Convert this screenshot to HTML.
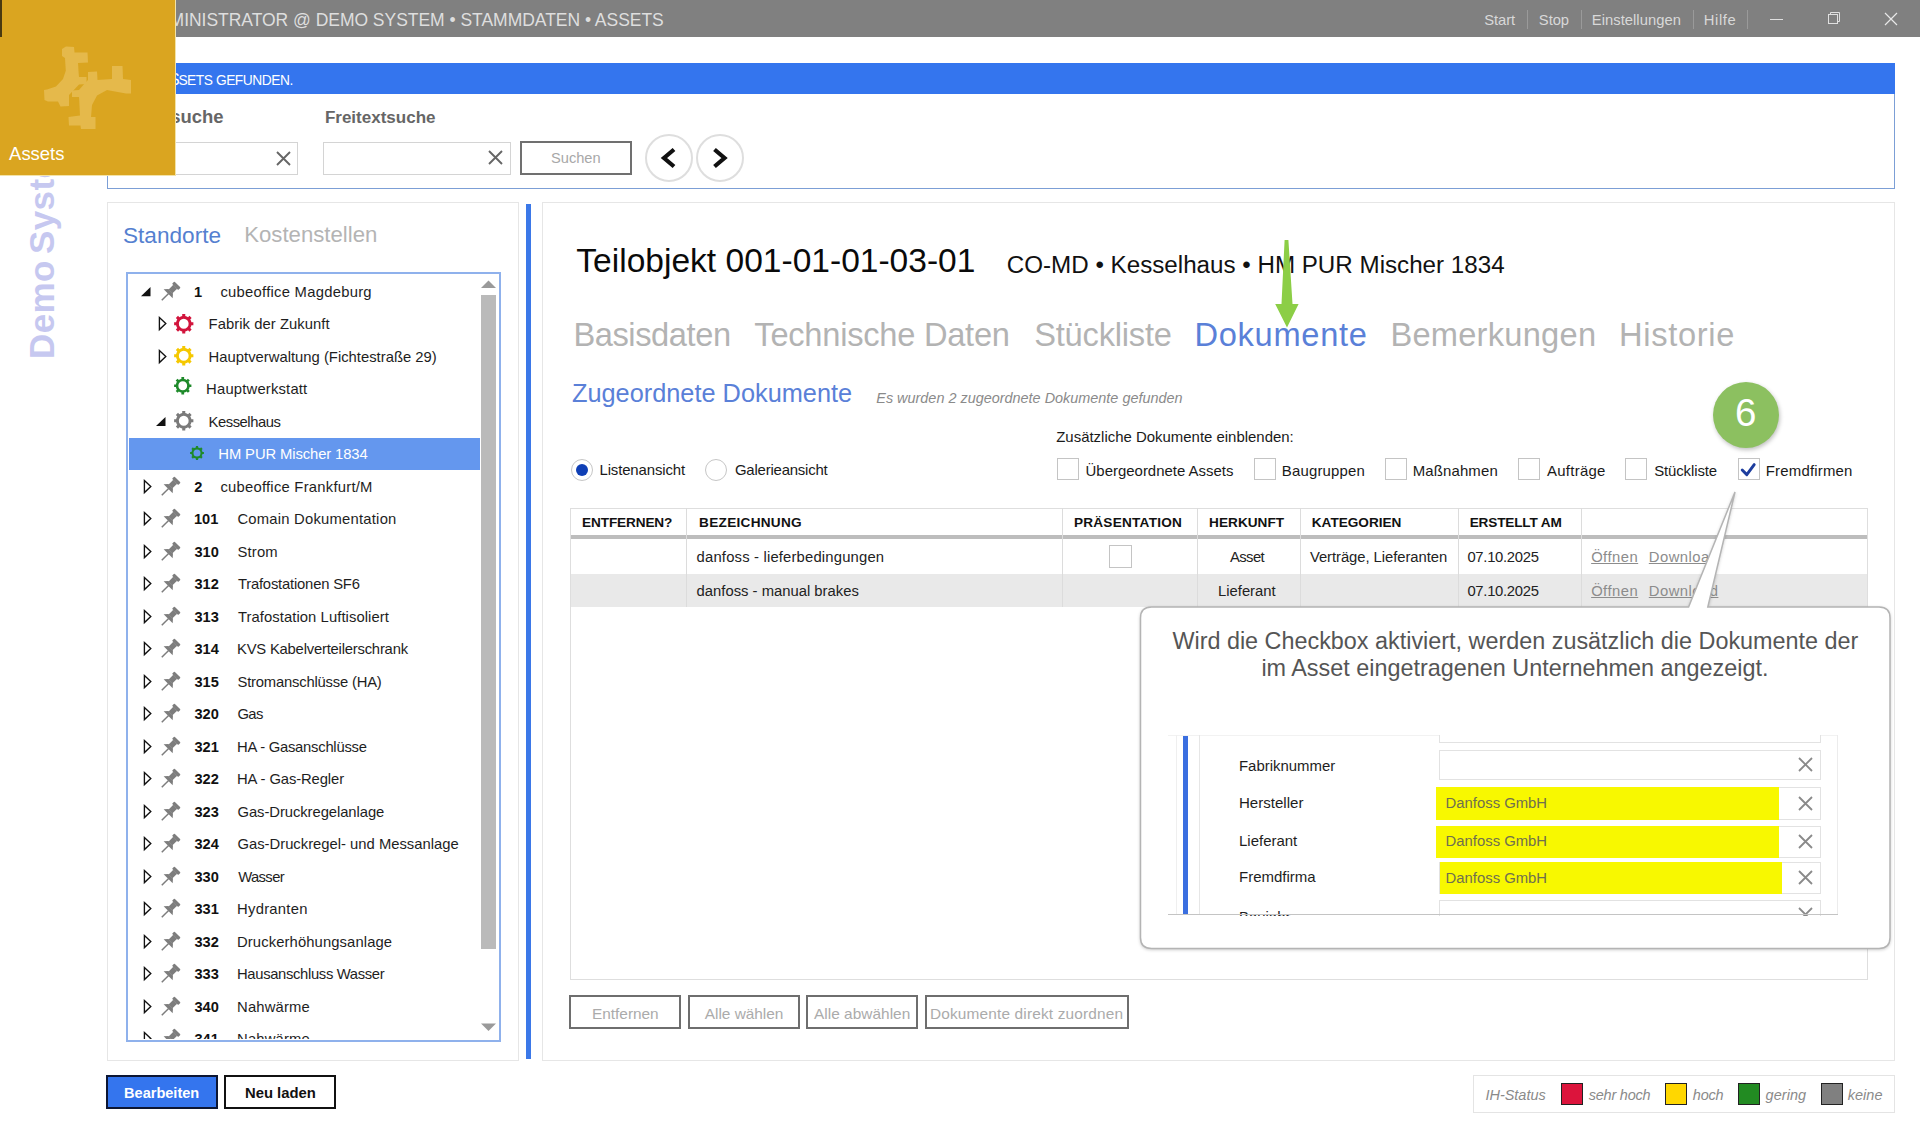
<!DOCTYPE html>
<html><head><meta charset="utf-8"><title>Assets</title><style>*{margin:0;padding:0}
html,body{width:1920px;height:1140px;overflow:hidden;background:#fff;position:relative}
body{font-family:"Liberation Sans",sans-serif}
.a{position:absolute}
.t{white-space:nowrap}
svg.a{overflow:visible}
</style></head><body>
<div class="a" style="left:0.00px;top:0.00px;width:1920.00px;height:36.80px;background:#808080;"></div>
<div class="a t" style="left:169.60px;top:10.86px;font-size:17.50px;line-height:19.55px;color:#dedede;letter-spacing:-0.027px;">MINISTRATOR @ DEMO SYSTEM • STAMMDATEN • ASSETS</div>
<div class="a t" style="left:1484.33px;top:12.32px;font-size:14.78px;line-height:16.52px;color:#d8d8d8;letter-spacing:-0.114px;">Start</div>
<div class="a t" style="left:1538.83px;top:12.32px;font-size:14.78px;line-height:16.52px;color:#d8d8d8;letter-spacing:-0.041px;">Stop</div>
<div class="a t" style="left:1591.82px;top:12.32px;font-size:14.78px;line-height:16.52px;color:#d8d8d8;letter-spacing:0.031px;">Einstellungen</div>
<div class="a t" style="left:1703.82px;top:12.32px;font-size:14.78px;line-height:16.52px;color:#d8d8d8;letter-spacing:0.570px;">Hilfe</div>
<div class="a" style="left:1527.00px;top:9.50px;width:1.00px;height:19.00px;background:#9a9a9a;"></div>
<div class="a" style="left:1581.00px;top:9.50px;width:1.00px;height:19.00px;background:#9a9a9a;"></div>
<div class="a" style="left:1693.00px;top:9.50px;width:1.00px;height:19.00px;background:#9a9a9a;"></div>
<div class="a" style="left:1747.00px;top:9.50px;width:1.00px;height:19.00px;background:#9a9a9a;"></div>
<div class="a" style="left:1770.00px;top:18.50px;width:13.00px;height:1.20px;background:#e0e0e0;"></div>
<svg class="a" style="left:1826.00px;top:10.00px;" width="16" height="16" viewBox="0 0 16 16"><rect x="2.5" y="4.5" width="9" height="9" fill="none" stroke="#e0e0e0" stroke-width="1"/><path d="M4.5,4.5 V2.5 H13.5 V11.5 H11.5" fill="none" stroke="#e0e0e0" stroke-width="1"/></svg>
<svg class="a" style="left:1883.00px;top:11.00px;" width="16" height="16" viewBox="0 0 16 16"><path d="M2,2 L14,14 M14,2 L2,14" stroke="#e8e8e8" stroke-width="1.2"/></svg>
<div class="a" style="left:107.00px;top:63.00px;width:1788.00px;height:126.00px;border:1px solid #7c9fd6;box-sizing:border-box;"></div>
<div class="a" style="left:107.00px;top:62.70px;width:1788.00px;height:31.40px;background:#3475ee;"></div>
<div class="a t" style="left:178.38px;top:72.55px;font-size:13.75px;line-height:15.36px;color:#ffffff;letter-spacing:-0.446px;">SETS GEFUNDEN.</div>
<div class="a t" style="left:158.45px;top:70.53px;font-size:15.99px;line-height:17.86px;color:#ffffff;">AS</div>
<div class="a t" style="left:104.68px;top:107.19px;font-size:18.46px;line-height:20.62px;color:#666;font-weight:700;">Schnellsuche</div>
<div class="a" style="left:120.00px;top:142.00px;width:177.50px;height:32.50px;background:#fff;border:1px solid #d4d4d4;box-sizing:border-box;"></div>
<svg class="a" style="left:275.50px;top:150.50px;" width="15" height="15" viewBox="0 0 15 15"><path d="M1,1 L14,14 M14,1 L1,14" stroke="#666" stroke-width="1.9"/></svg>
<div class="a t" style="left:324.89px;top:108.48px;font-size:17.03px;line-height:19.03px;color:#666;font-weight:700;">Freitextsuche</div>
<div class="a" style="left:323.00px;top:142.00px;width:187.50px;height:32.50px;background:#fff;border:1px solid #d4d4d4;box-sizing:border-box;"></div>
<svg class="a" style="left:488.10px;top:150.30px;" width="15" height="15" viewBox="0 0 15 15"><path d="M1,1 L14,14 M14,1 L1,14" stroke="#666" stroke-width="1.9"/></svg>
<div class="a" style="left:520.00px;top:140.50px;width:112.00px;height:34.50px;background:#fff;border:2.5px solid #707070;box-sizing:border-box;"></div>
<div class="a t" style="left:551.04px;top:150.45px;font-size:14.63px;line-height:16.35px;color:#a8a8a8;">Suchen</div>
<div class="a" style="left:645px;top:133.6px;width:48px;height:48px;border:2px solid #dedede;border-radius:50%;box-sizing:border-box;background:#fff"></div>
<div class="a" style="left:695.7px;top:133.6px;width:48px;height:48px;border:2px solid #dedede;border-radius:50%;box-sizing:border-box;background:#fff"></div>
<svg class="a" style="left:659.00px;top:147.00px;" width="20" height="22" viewBox="0 0 20 22"><path d="M15,2.5 L5,11 L15,19.5" fill="none" stroke="#111" stroke-width="4.2" stroke-linejoin="miter"/></svg>
<svg class="a" style="left:709.50px;top:147.00px;" width="20" height="22" viewBox="0 0 20 22"><path d="M4.5,2.5 L14.5,11 L4.5,19.5" fill="none" stroke="#111" stroke-width="4.2" stroke-linejoin="miter"/></svg>
<div class="a t" style="left:0;top:0;width:400px;height:60px;transform-origin:0 0;transform:translate(22px,359px) rotate(-90deg);font-weight:700;font-size:35px;line-height:40px;color:#c6c8f0;white-space:nowrap;word-spacing:-4px;letter-spacing:0.4px">Demo System</div>
<div class="a" style="left:0.00px;top:0.00px;width:176.00px;height:176.00px;background:#f3e3a8;"></div>
<div class="a" style="left:0.00px;top:0.00px;width:175.00px;height:175.00px;background:#daa520;"></div>
<div class="a" style="left:0.00px;top:0.00px;width:2.00px;height:37.00px;background:#4a3a10;"></div>
<svg class="a" style="left:0.00px;top:0.00px;" width="175" height="175" viewBox="0 0 175 175"><defs><filter id="bl" x="-10%" y="-10%" width="120%" height="120%"><feGaussianBlur stdDeviation="0.6"/></filter></defs><g fill="#e5b94c" filter="url(#bl)"><polygon points="62,49 66,46.5 74,47 74.5,52.5 87.5,52.5 88,62.5 78,63 78.7,74 79,77 86.5,77 86.5,84 79,84.5 69,95 69,106 60.5,106.5 58,101.5 48,101.5 44.5,100 44,90 47,89.5 56,86.5 63,79 65.8,70.7 65,58 62,56"/><polygon points="88,72 97,71.5 97.5,80 112,79 112,66 122.5,66 123,79 131,80 131,93.5 126,93.5 107,90 97,95.5 92,105 91,117 95.5,117 95.5,129 81,129 80.5,125.5 69,125.5 68.5,117 80,115.5 79.3,101 79,97 72,97 72,90.5 79,90 85,83 88,80"/></g></svg>
<div class="a t" style="left:9.10px;top:143.70px;font-size:18.45px;line-height:20.61px;color:#ffffff;">Assets</div>
<div class="a" style="left:107.00px;top:202.00px;width:411.50px;height:859.00px;background:#fff;border:1px solid #e6e6e6;box-sizing:border-box;"></div>
<div class="a t" style="left:122.98px;top:222.53px;font-size:22.61px;line-height:25.27px;color:#5580d0;">Standorte</div>
<div class="a t" style="left:244.23px;top:222.92px;font-size:22.18px;line-height:24.78px;color:#b4b4b4;">Kostenstellen</div>
<div class="a" style="left:126.00px;top:272.00px;width:375.00px;height:770.00px;background:#fff;border:2px solid #8fb1ec;box-sizing:border-box;"></div>
<div class="a" style="left:0;top:0;width:480px;height:1038.5px;overflow:hidden">
<div class="a" style="left:129.00px;top:437.50px;width:351.00px;height:32.00px;background:#6497ee;"></div>
<svg class="a" style="left:140.50px;top:286.50px;" width="9.5" height="9.300000000000011" viewBox="0 0 9.5 9.300000000000011"><polygon points="9.5,0 9.5,9.300000000000011 0,9.300000000000011" fill="#111"/></svg>
<svg class="a" style="left:159.50px;top:281.50px;" width="20" height="20" viewBox="0 0 20 20"><g transform="rotate(45 10 10)" fill="#7d7d7d"><rect x="5.6" y="-0.6" width="8.8" height="3.4" rx="0.8"/><rect x="7.3" y="2.6" width="5.4" height="6.6"/><path d="M3.6,12.6 L16.4,12.6 L13.2,9 L6.8,9 Z"/><rect x="9.25" y="12" width="1.5" height="9.6"/></g></svg>
<div class="a t" style="left:193.92px;top:283.98px;font-size:14.60px;line-height:16.31px;color:#111;font-weight:700;">1</div>
<div class="a t" style="left:220.41px;top:283.80px;font-size:14.80px;line-height:16.53px;color:#1e1e1e;letter-spacing:0.263px;">cubeoffice Magdeburg</div>
<svg class="a" style="left:158.30px;top:316.20px;" width="10" height="15" viewBox="0 0 10 15"><polygon points="1.4,1.6 7.8,7.6 1.4,13.6" fill="none" stroke="#111" stroke-width="1.35" stroke-linejoin="miter"/></svg>
<svg class="a" style="left:173.25px;top:312.55px;" width="21.5" height="21.5" viewBox="0 0 21.5 21.5"><path d="M7.77,3.54 L9.23,3.10 L9.22,1.12 L12.28,1.12 L12.27,3.10 L13.73,3.54 L15.08,4.26 L16.48,2.86 L18.64,5.02 L17.24,6.42 L17.96,7.77 L18.40,9.23 L20.38,9.22 L20.38,12.28 L18.40,12.27 L17.96,13.73 L17.24,15.08 L18.64,16.48 L16.48,18.64 L15.08,17.24 L13.73,17.96 L12.27,18.40 L12.28,20.38 L9.22,20.38 L9.23,18.40 L7.77,17.96 L6.42,17.24 L5.02,18.64 L2.86,16.48 L4.26,15.08 L3.54,13.73 L3.10,12.27 L1.12,12.28 L1.12,9.22 L3.10,9.23 L3.54,7.77 L4.26,6.42 L2.86,5.02 L5.02,2.86 L6.42,4.26Z M15.62,10.75 A4.875,4.875 0 1,0 5.88,10.75 A4.875,4.875 0 1,0 15.62,10.75Z" fill="#d2143c" fill-rule="evenodd"/></svg>
<div class="a t" style="left:208.62px;top:316.30px;font-size:14.80px;line-height:16.53px;color:#1e1e1e;letter-spacing:0.055px;">Fabrik der Zukunft</div>
<svg class="a" style="left:158.30px;top:348.70px;" width="10" height="15" viewBox="0 0 10 15"><polygon points="1.4,1.6 7.8,7.6 1.4,13.6" fill="none" stroke="#111" stroke-width="1.35" stroke-linejoin="miter"/></svg>
<svg class="a" style="left:173.25px;top:345.05px;" width="21.5" height="21.5" viewBox="0 0 21.5 21.5"><path d="M7.77,3.54 L9.23,3.10 L9.22,1.12 L12.28,1.12 L12.27,3.10 L13.73,3.54 L15.08,4.26 L16.48,2.86 L18.64,5.02 L17.24,6.42 L17.96,7.77 L18.40,9.23 L20.38,9.22 L20.38,12.28 L18.40,12.27 L17.96,13.73 L17.24,15.08 L18.64,16.48 L16.48,18.64 L15.08,17.24 L13.73,17.96 L12.27,18.40 L12.28,20.38 L9.22,20.38 L9.23,18.40 L7.77,17.96 L6.42,17.24 L5.02,18.64 L2.86,16.48 L4.26,15.08 L3.54,13.73 L3.10,12.27 L1.12,12.28 L1.12,9.22 L3.10,9.23 L3.54,7.77 L4.26,6.42 L2.86,5.02 L5.02,2.86 L6.42,4.26Z M15.62,10.75 A4.875,4.875 0 1,0 5.88,10.75 A4.875,4.875 0 1,0 15.62,10.75Z" fill="#f5c800" fill-rule="evenodd"/></svg>
<div class="a t" style="left:208.62px;top:348.80px;font-size:14.80px;line-height:16.53px;color:#1e1e1e;letter-spacing:0.010px;">Hauptverwaltung (Fichtestraße 29)</div>
<svg class="a" style="left:173.25px;top:376.25px;" width="19.5" height="19.5" viewBox="0 0 19.5 19.5"><path d="M7.07,3.28 L8.38,2.88 L8.38,1.11 L11.12,1.11 L11.12,2.88 L12.43,3.28 L13.64,3.93 L14.89,2.67 L16.83,4.61 L15.57,5.86 L16.22,7.07 L16.62,8.38 L18.39,8.38 L18.39,11.12 L16.62,11.12 L16.22,12.43 L15.57,13.64 L16.83,14.89 L14.89,16.83 L13.64,15.57 L12.43,16.22 L11.12,16.62 L11.12,18.39 L8.38,18.39 L8.38,16.62 L7.07,16.22 L5.86,15.57 L4.61,16.83 L2.67,14.89 L3.93,13.64 L3.28,12.43 L2.88,11.12 L1.11,11.12 L1.11,8.38 L2.88,8.38 L3.28,7.07 L3.93,5.86 L2.67,4.61 L4.61,2.67 L5.86,3.93Z M14.12,9.75 A4.375,4.375 0 1,0 5.38,9.75 A4.375,4.375 0 1,0 14.12,9.75Z" fill="#1e8a2a" fill-rule="evenodd"/></svg>
<div class="a t" style="left:206.12px;top:381.30px;font-size:14.80px;line-height:16.53px;color:#1e1e1e;letter-spacing:0.186px;">Hauptwerkstatt</div>
<svg class="a" style="left:155.50px;top:416.50px;" width="9.5" height="9.0" viewBox="0 0 9.5 9.0"><polygon points="9.5,0 9.5,9.0 0,9.0" fill="#111"/></svg>
<svg class="a" style="left:173.25px;top:410.05px;" width="21.5" height="21.5" viewBox="0 0 21.5 21.5"><path d="M7.77,3.54 L9.23,3.10 L9.22,1.12 L12.28,1.12 L12.27,3.10 L13.73,3.54 L15.08,4.26 L16.48,2.86 L18.64,5.02 L17.24,6.42 L17.96,7.77 L18.40,9.23 L20.38,9.22 L20.38,12.28 L18.40,12.27 L17.96,13.73 L17.24,15.08 L18.64,16.48 L16.48,18.64 L15.08,17.24 L13.73,17.96 L12.27,18.40 L12.28,20.38 L9.22,20.38 L9.23,18.40 L7.77,17.96 L6.42,17.24 L5.02,18.64 L2.86,16.48 L4.26,15.08 L3.54,13.73 L3.10,12.27 L1.12,12.28 L1.12,9.22 L3.10,9.23 L3.54,7.77 L4.26,6.42 L2.86,5.02 L5.02,2.86 L6.42,4.26Z M15.62,10.75 A4.875,4.875 0 1,0 5.88,10.75 A4.875,4.875 0 1,0 15.62,10.75Z" fill="#7a7a7a" fill-rule="evenodd"/></svg>
<div class="a t" style="left:208.62px;top:413.80px;font-size:14.80px;line-height:16.53px;color:#1e1e1e;letter-spacing:-0.479px;">Kesselhaus</div>
<svg class="a" style="left:188.80px;top:445.20px;" width="16" height="16" viewBox="0 0 16 16"><path d="M5.86,2.83 L6.91,2.51 L6.90,1.09 L9.10,1.09 L9.09,2.51 L10.14,2.83 L11.11,3.34 L12.11,2.34 L13.66,3.89 L12.66,4.89 L13.17,5.86 L13.49,6.91 L14.91,6.90 L14.91,9.10 L13.49,9.09 L13.17,10.14 L12.66,11.11 L13.66,12.11 L12.11,13.66 L11.11,12.66 L10.14,13.17 L9.09,13.49 L9.10,14.91 L6.90,14.91 L6.91,13.49 L5.86,13.17 L4.89,12.66 L3.89,13.66 L2.34,12.11 L3.34,11.11 L2.83,10.14 L2.51,9.09 L1.09,9.10 L1.09,6.90 L2.51,6.91 L2.83,5.86 L3.34,4.89 L2.34,3.89 L3.89,2.34 L4.89,3.34Z M11.50,8.00 A3.5,3.5 0 1,0 4.50,8.00 A3.5,3.5 0 1,0 11.50,8.00Z" fill="#1e8a2a" fill-rule="evenodd"/></svg>
<div class="a t" style="left:218.32px;top:446.30px;font-size:14.80px;line-height:16.53px;color:#ffffff;letter-spacing:-0.106px;">HM PUR Mischer 1834</div>
<svg class="a" style="left:142.80px;top:478.70px;" width="10" height="15" viewBox="0 0 10 15"><polygon points="1.4,1.6 7.8,7.6 1.4,13.6" fill="none" stroke="#111" stroke-width="1.35" stroke-linejoin="miter"/></svg>
<svg class="a" style="left:159.50px;top:476.50px;" width="20" height="20" viewBox="0 0 20 20"><g transform="rotate(45 10 10)" fill="#7d7d7d"><rect x="5.6" y="-0.6" width="8.8" height="3.4" rx="0.8"/><rect x="7.3" y="2.6" width="5.4" height="6.6"/><path d="M3.6,12.6 L16.4,12.6 L13.2,9 L6.8,9 Z"/><rect x="9.25" y="12" width="1.5" height="9.6"/></g></svg>
<div class="a t" style="left:194.29px;top:478.98px;font-size:14.60px;line-height:16.31px;color:#111;font-weight:700;">2</div>
<div class="a t" style="left:220.41px;top:478.80px;font-size:14.80px;line-height:16.53px;color:#1e1e1e;letter-spacing:0.242px;">cubeoffice Frankfurt/M</div>
<svg class="a" style="left:142.80px;top:511.20px;" width="10" height="15" viewBox="0 0 10 15"><polygon points="1.4,1.6 7.8,7.6 1.4,13.6" fill="none" stroke="#111" stroke-width="1.35" stroke-linejoin="miter"/></svg>
<svg class="a" style="left:159.50px;top:509.00px;" width="20" height="20" viewBox="0 0 20 20"><g transform="rotate(45 10 10)" fill="#7d7d7d"><rect x="5.6" y="-0.6" width="8.8" height="3.4" rx="0.8"/><rect x="7.3" y="2.6" width="5.4" height="6.6"/><path d="M3.6,12.6 L16.4,12.6 L13.2,9 L6.8,9 Z"/><rect x="9.25" y="12" width="1.5" height="9.6"/></g></svg>
<div class="a t" style="left:193.92px;top:511.48px;font-size:14.60px;line-height:16.31px;color:#111;font-weight:700;">101</div>
<div class="a t" style="left:237.46px;top:511.30px;font-size:14.80px;line-height:16.53px;color:#1e1e1e;letter-spacing:0.223px;">Comain Dokumentation</div>
<svg class="a" style="left:142.80px;top:543.70px;" width="10" height="15" viewBox="0 0 10 15"><polygon points="1.4,1.6 7.8,7.6 1.4,13.6" fill="none" stroke="#111" stroke-width="1.35" stroke-linejoin="miter"/></svg>
<svg class="a" style="left:159.50px;top:541.50px;" width="20" height="20" viewBox="0 0 20 20"><g transform="rotate(45 10 10)" fill="#7d7d7d"><rect x="5.6" y="-0.6" width="8.8" height="3.4" rx="0.8"/><rect x="7.3" y="2.6" width="5.4" height="6.6"/><path d="M3.6,12.6 L16.4,12.6 L13.2,9 L6.8,9 Z"/><rect x="9.25" y="12" width="1.5" height="9.6"/></g></svg>
<div class="a t" style="left:194.44px;top:543.98px;font-size:14.60px;line-height:16.31px;color:#111;font-weight:700;">310</div>
<div class="a t" style="left:237.53px;top:543.80px;font-size:14.80px;line-height:16.53px;color:#1e1e1e;letter-spacing:0.178px;">Strom</div>
<svg class="a" style="left:142.80px;top:576.20px;" width="10" height="15" viewBox="0 0 10 15"><polygon points="1.4,1.6 7.8,7.6 1.4,13.6" fill="none" stroke="#111" stroke-width="1.35" stroke-linejoin="miter"/></svg>
<svg class="a" style="left:159.50px;top:574.00px;" width="20" height="20" viewBox="0 0 20 20"><g transform="rotate(45 10 10)" fill="#7d7d7d"><rect x="5.6" y="-0.6" width="8.8" height="3.4" rx="0.8"/><rect x="7.3" y="2.6" width="5.4" height="6.6"/><path d="M3.6,12.6 L16.4,12.6 L13.2,9 L6.8,9 Z"/><rect x="9.25" y="12" width="1.5" height="9.6"/></g></svg>
<div class="a t" style="left:194.44px;top:576.48px;font-size:14.60px;line-height:16.31px;color:#111;font-weight:700;">312</div>
<div class="a t" style="left:237.90px;top:576.30px;font-size:14.80px;line-height:16.53px;color:#1e1e1e;letter-spacing:-0.194px;">Trafostationen SF6</div>
<svg class="a" style="left:142.80px;top:608.70px;" width="10" height="15" viewBox="0 0 10 15"><polygon points="1.4,1.6 7.8,7.6 1.4,13.6" fill="none" stroke="#111" stroke-width="1.35" stroke-linejoin="miter"/></svg>
<svg class="a" style="left:159.50px;top:606.50px;" width="20" height="20" viewBox="0 0 20 20"><g transform="rotate(45 10 10)" fill="#7d7d7d"><rect x="5.6" y="-0.6" width="8.8" height="3.4" rx="0.8"/><rect x="7.3" y="2.6" width="5.4" height="6.6"/><path d="M3.6,12.6 L16.4,12.6 L13.2,9 L6.8,9 Z"/><rect x="9.25" y="12" width="1.5" height="9.6"/></g></svg>
<div class="a t" style="left:194.44px;top:608.98px;font-size:14.60px;line-height:16.31px;color:#111;font-weight:700;">313</div>
<div class="a t" style="left:237.90px;top:608.80px;font-size:14.80px;line-height:16.53px;color:#1e1e1e;letter-spacing:0.078px;">Trafostation Luftisoliert</div>
<svg class="a" style="left:142.80px;top:641.20px;" width="10" height="15" viewBox="0 0 10 15"><polygon points="1.4,1.6 7.8,7.6 1.4,13.6" fill="none" stroke="#111" stroke-width="1.35" stroke-linejoin="miter"/></svg>
<svg class="a" style="left:159.50px;top:639.00px;" width="20" height="20" viewBox="0 0 20 20"><g transform="rotate(45 10 10)" fill="#7d7d7d"><rect x="5.6" y="-0.6" width="8.8" height="3.4" rx="0.8"/><rect x="7.3" y="2.6" width="5.4" height="6.6"/><path d="M3.6,12.6 L16.4,12.6 L13.2,9 L6.8,9 Z"/><rect x="9.25" y="12" width="1.5" height="9.6"/></g></svg>
<div class="a t" style="left:194.44px;top:641.48px;font-size:14.60px;line-height:16.31px;color:#111;font-weight:700;">314</div>
<div class="a t" style="left:237.02px;top:641.30px;font-size:14.80px;line-height:16.53px;color:#1e1e1e;letter-spacing:-0.207px;">KVS Kabelverteilerschrank</div>
<svg class="a" style="left:142.80px;top:673.70px;" width="10" height="15" viewBox="0 0 10 15"><polygon points="1.4,1.6 7.8,7.6 1.4,13.6" fill="none" stroke="#111" stroke-width="1.35" stroke-linejoin="miter"/></svg>
<svg class="a" style="left:159.50px;top:671.50px;" width="20" height="20" viewBox="0 0 20 20"><g transform="rotate(45 10 10)" fill="#7d7d7d"><rect x="5.6" y="-0.6" width="8.8" height="3.4" rx="0.8"/><rect x="7.3" y="2.6" width="5.4" height="6.6"/><path d="M3.6,12.6 L16.4,12.6 L13.2,9 L6.8,9 Z"/><rect x="9.25" y="12" width="1.5" height="9.6"/></g></svg>
<div class="a t" style="left:194.44px;top:673.98px;font-size:14.60px;line-height:16.31px;color:#111;font-weight:700;">315</div>
<div class="a t" style="left:237.53px;top:673.80px;font-size:14.80px;line-height:16.53px;color:#1e1e1e;letter-spacing:-0.197px;">Stromanschlüsse (HA)</div>
<svg class="a" style="left:142.80px;top:706.20px;" width="10" height="15" viewBox="0 0 10 15"><polygon points="1.4,1.6 7.8,7.6 1.4,13.6" fill="none" stroke="#111" stroke-width="1.35" stroke-linejoin="miter"/></svg>
<svg class="a" style="left:159.50px;top:704.00px;" width="20" height="20" viewBox="0 0 20 20"><g transform="rotate(45 10 10)" fill="#7d7d7d"><rect x="5.6" y="-0.6" width="8.8" height="3.4" rx="0.8"/><rect x="7.3" y="2.6" width="5.4" height="6.6"/><path d="M3.6,12.6 L16.4,12.6 L13.2,9 L6.8,9 Z"/><rect x="9.25" y="12" width="1.5" height="9.6"/></g></svg>
<div class="a t" style="left:194.44px;top:706.48px;font-size:14.60px;line-height:16.31px;color:#111;font-weight:700;">320</div>
<div class="a t" style="left:237.46px;top:706.30px;font-size:14.80px;line-height:16.53px;color:#1e1e1e;letter-spacing:-0.600px;">Gas</div>
<svg class="a" style="left:142.80px;top:738.70px;" width="10" height="15" viewBox="0 0 10 15"><polygon points="1.4,1.6 7.8,7.6 1.4,13.6" fill="none" stroke="#111" stroke-width="1.35" stroke-linejoin="miter"/></svg>
<svg class="a" style="left:159.50px;top:736.50px;" width="20" height="20" viewBox="0 0 20 20"><g transform="rotate(45 10 10)" fill="#7d7d7d"><rect x="5.6" y="-0.6" width="8.8" height="3.4" rx="0.8"/><rect x="7.3" y="2.6" width="5.4" height="6.6"/><path d="M3.6,12.6 L16.4,12.6 L13.2,9 L6.8,9 Z"/><rect x="9.25" y="12" width="1.5" height="9.6"/></g></svg>
<div class="a t" style="left:194.44px;top:738.98px;font-size:14.60px;line-height:16.31px;color:#111;font-weight:700;">321</div>
<div class="a t" style="left:237.02px;top:738.80px;font-size:14.80px;line-height:16.53px;color:#1e1e1e;letter-spacing:-0.243px;">HA - Gasanschlüsse</div>
<svg class="a" style="left:142.80px;top:771.20px;" width="10" height="15" viewBox="0 0 10 15"><polygon points="1.4,1.6 7.8,7.6 1.4,13.6" fill="none" stroke="#111" stroke-width="1.35" stroke-linejoin="miter"/></svg>
<svg class="a" style="left:159.50px;top:769.00px;" width="20" height="20" viewBox="0 0 20 20"><g transform="rotate(45 10 10)" fill="#7d7d7d"><rect x="5.6" y="-0.6" width="8.8" height="3.4" rx="0.8"/><rect x="7.3" y="2.6" width="5.4" height="6.6"/><path d="M3.6,12.6 L16.4,12.6 L13.2,9 L6.8,9 Z"/><rect x="9.25" y="12" width="1.5" height="9.6"/></g></svg>
<div class="a t" style="left:194.44px;top:771.48px;font-size:14.60px;line-height:16.31px;color:#111;font-weight:700;">322</div>
<div class="a t" style="left:237.02px;top:771.30px;font-size:14.80px;line-height:16.53px;color:#1e1e1e;letter-spacing:-0.104px;">HA - Gas-Regler</div>
<svg class="a" style="left:142.80px;top:803.70px;" width="10" height="15" viewBox="0 0 10 15"><polygon points="1.4,1.6 7.8,7.6 1.4,13.6" fill="none" stroke="#111" stroke-width="1.35" stroke-linejoin="miter"/></svg>
<svg class="a" style="left:159.50px;top:801.50px;" width="20" height="20" viewBox="0 0 20 20"><g transform="rotate(45 10 10)" fill="#7d7d7d"><rect x="5.6" y="-0.6" width="8.8" height="3.4" rx="0.8"/><rect x="7.3" y="2.6" width="5.4" height="6.6"/><path d="M3.6,12.6 L16.4,12.6 L13.2,9 L6.8,9 Z"/><rect x="9.25" y="12" width="1.5" height="9.6"/></g></svg>
<div class="a t" style="left:194.44px;top:803.98px;font-size:14.60px;line-height:16.31px;color:#111;font-weight:700;">323</div>
<div class="a t" style="left:237.46px;top:803.80px;font-size:14.80px;line-height:16.53px;color:#1e1e1e;letter-spacing:-0.061px;">Gas-Druckregelanlage</div>
<svg class="a" style="left:142.80px;top:836.20px;" width="10" height="15" viewBox="0 0 10 15"><polygon points="1.4,1.6 7.8,7.6 1.4,13.6" fill="none" stroke="#111" stroke-width="1.35" stroke-linejoin="miter"/></svg>
<svg class="a" style="left:159.50px;top:834.00px;" width="20" height="20" viewBox="0 0 20 20"><g transform="rotate(45 10 10)" fill="#7d7d7d"><rect x="5.6" y="-0.6" width="8.8" height="3.4" rx="0.8"/><rect x="7.3" y="2.6" width="5.4" height="6.6"/><path d="M3.6,12.6 L16.4,12.6 L13.2,9 L6.8,9 Z"/><rect x="9.25" y="12" width="1.5" height="9.6"/></g></svg>
<div class="a t" style="left:194.44px;top:836.48px;font-size:14.60px;line-height:16.31px;color:#111;font-weight:700;">324</div>
<div class="a t" style="left:237.46px;top:836.30px;font-size:14.80px;line-height:16.53px;color:#1e1e1e;">Gas-Druckregel- und Messanlage</div>
<svg class="a" style="left:142.80px;top:868.70px;" width="10" height="15" viewBox="0 0 10 15"><polygon points="1.4,1.6 7.8,7.6 1.4,13.6" fill="none" stroke="#111" stroke-width="1.35" stroke-linejoin="miter"/></svg>
<svg class="a" style="left:159.50px;top:866.50px;" width="20" height="20" viewBox="0 0 20 20"><g transform="rotate(45 10 10)" fill="#7d7d7d"><rect x="5.6" y="-0.6" width="8.8" height="3.4" rx="0.8"/><rect x="7.3" y="2.6" width="5.4" height="6.6"/><path d="M3.6,12.6 L16.4,12.6 L13.2,9 L6.8,9 Z"/><rect x="9.25" y="12" width="1.5" height="9.6"/></g></svg>
<div class="a t" style="left:194.44px;top:868.98px;font-size:14.60px;line-height:16.31px;color:#111;font-weight:700;">330</div>
<div class="a t" style="left:238.13px;top:868.80px;font-size:14.80px;line-height:16.53px;color:#1e1e1e;letter-spacing:-0.600px;">Wasser</div>
<svg class="a" style="left:142.80px;top:901.20px;" width="10" height="15" viewBox="0 0 10 15"><polygon points="1.4,1.6 7.8,7.6 1.4,13.6" fill="none" stroke="#111" stroke-width="1.35" stroke-linejoin="miter"/></svg>
<svg class="a" style="left:159.50px;top:899.00px;" width="20" height="20" viewBox="0 0 20 20"><g transform="rotate(45 10 10)" fill="#7d7d7d"><rect x="5.6" y="-0.6" width="8.8" height="3.4" rx="0.8"/><rect x="7.3" y="2.6" width="5.4" height="6.6"/><path d="M3.6,12.6 L16.4,12.6 L13.2,9 L6.8,9 Z"/><rect x="9.25" y="12" width="1.5" height="9.6"/></g></svg>
<div class="a t" style="left:194.44px;top:901.48px;font-size:14.60px;line-height:16.31px;color:#111;font-weight:700;">331</div>
<div class="a t" style="left:237.02px;top:901.30px;font-size:14.80px;line-height:16.53px;color:#1e1e1e;letter-spacing:0.268px;">Hydranten</div>
<svg class="a" style="left:142.80px;top:933.70px;" width="10" height="15" viewBox="0 0 10 15"><polygon points="1.4,1.6 7.8,7.6 1.4,13.6" fill="none" stroke="#111" stroke-width="1.35" stroke-linejoin="miter"/></svg>
<svg class="a" style="left:159.50px;top:931.50px;" width="20" height="20" viewBox="0 0 20 20"><g transform="rotate(45 10 10)" fill="#7d7d7d"><rect x="5.6" y="-0.6" width="8.8" height="3.4" rx="0.8"/><rect x="7.3" y="2.6" width="5.4" height="6.6"/><path d="M3.6,12.6 L16.4,12.6 L13.2,9 L6.8,9 Z"/><rect x="9.25" y="12" width="1.5" height="9.6"/></g></svg>
<div class="a t" style="left:194.44px;top:933.98px;font-size:14.60px;line-height:16.31px;color:#111;font-weight:700;">332</div>
<div class="a t" style="left:237.02px;top:933.80px;font-size:14.80px;line-height:16.53px;color:#1e1e1e;letter-spacing:0.106px;">Druckerhöhungsanlage</div>
<svg class="a" style="left:142.80px;top:966.20px;" width="10" height="15" viewBox="0 0 10 15"><polygon points="1.4,1.6 7.8,7.6 1.4,13.6" fill="none" stroke="#111" stroke-width="1.35" stroke-linejoin="miter"/></svg>
<svg class="a" style="left:159.50px;top:964.00px;" width="20" height="20" viewBox="0 0 20 20"><g transform="rotate(45 10 10)" fill="#7d7d7d"><rect x="5.6" y="-0.6" width="8.8" height="3.4" rx="0.8"/><rect x="7.3" y="2.6" width="5.4" height="6.6"/><path d="M3.6,12.6 L16.4,12.6 L13.2,9 L6.8,9 Z"/><rect x="9.25" y="12" width="1.5" height="9.6"/></g></svg>
<div class="a t" style="left:194.44px;top:966.48px;font-size:14.60px;line-height:16.31px;color:#111;font-weight:700;">333</div>
<div class="a t" style="left:237.02px;top:966.30px;font-size:14.80px;line-height:16.53px;color:#1e1e1e;letter-spacing:-0.340px;">Hausanschluss Wasser</div>
<svg class="a" style="left:142.80px;top:998.70px;" width="10" height="15" viewBox="0 0 10 15"><polygon points="1.4,1.6 7.8,7.6 1.4,13.6" fill="none" stroke="#111" stroke-width="1.35" stroke-linejoin="miter"/></svg>
<svg class="a" style="left:159.50px;top:996.50px;" width="20" height="20" viewBox="0 0 20 20"><g transform="rotate(45 10 10)" fill="#7d7d7d"><rect x="5.6" y="-0.6" width="8.8" height="3.4" rx="0.8"/><rect x="7.3" y="2.6" width="5.4" height="6.6"/><path d="M3.6,12.6 L16.4,12.6 L13.2,9 L6.8,9 Z"/><rect x="9.25" y="12" width="1.5" height="9.6"/></g></svg>
<div class="a t" style="left:194.44px;top:998.98px;font-size:14.60px;line-height:16.31px;color:#111;font-weight:700;">340</div>
<div class="a t" style="left:237.02px;top:998.80px;font-size:14.80px;line-height:16.53px;color:#1e1e1e;letter-spacing:0.185px;">Nahwärme</div>
<svg class="a" style="left:142.80px;top:1031.20px;" width="10" height="15" viewBox="0 0 10 15"><polygon points="1.4,1.6 7.8,7.6 1.4,13.6" fill="none" stroke="#111" stroke-width="1.35" stroke-linejoin="miter"/></svg>
<svg class="a" style="left:159.50px;top:1029.00px;" width="20" height="20" viewBox="0 0 20 20"><g transform="rotate(45 10 10)" fill="#7d7d7d"><rect x="5.6" y="-0.6" width="8.8" height="3.4" rx="0.8"/><rect x="7.3" y="2.6" width="5.4" height="6.6"/><path d="M3.6,12.6 L16.4,12.6 L13.2,9 L6.8,9 Z"/><rect x="9.25" y="12" width="1.5" height="9.6"/></g></svg>
<div class="a t" style="left:194.44px;top:1031.48px;font-size:14.60px;line-height:16.31px;color:#111;font-weight:700;">341</div>
<div class="a t" style="left:237.02px;top:1031.30px;font-size:14.80px;line-height:16.53px;color:#1e1e1e;letter-spacing:0.185px;">Nahwärme</div>
</div>
<svg class="a" style="left:481.00px;top:280.00px;" width="15" height="9" viewBox="0 0 15 9"><polygon points="7.5,0.5 15,8 0,8" fill="#9a9a9a"/></svg>
<div class="a" style="left:481.00px;top:294.70px;width:15.00px;height:654.30px;background:#bababa;"></div>
<svg class="a" style="left:481.00px;top:1023.00px;" width="15" height="9" viewBox="0 0 15 9"><polygon points="0,0.5 15,0.5 7.5,8" fill="#9a9a9a"/></svg>
<div class="a" style="left:526.00px;top:203.50px;width:5.00px;height:855.50px;background:#3b78e8;"></div>
<div class="a" style="left:542.00px;top:202.00px;width:1353.00px;height:858.50px;background:#fff;border:1px solid #e6e6e6;box-sizing:border-box;"></div>
<div class="a t" style="left:576.33px;top:241.92px;font-size:33.56px;line-height:37.49px;color:#0a0a0a;">Teilobjekt 001-01-01-03-01</div>
<div class="a t" style="left:1006.79px;top:250.51px;font-size:24.18px;line-height:27.01px;color:#111;">CO-MD • Kesselhaus • HM PUR Mischer 1834</div>
<div class="a t" style="left:573.39px;top:316.85px;font-size:32.64px;line-height:36.46px;color:#b3b3b3;letter-spacing:-0.408px;">Basisdaten</div>
<div class="a t" style="left:754.35px;top:316.85px;font-size:32.64px;line-height:36.46px;color:#b3b3b3;letter-spacing:-0.247px;">Technische Daten</div>
<div class="a t" style="left:1034.13px;top:316.85px;font-size:32.64px;line-height:36.46px;color:#b3b3b3;letter-spacing:-0.195px;">Stückliste</div>
<div class="a t" style="left:1194.39px;top:316.85px;font-size:32.64px;line-height:36.46px;color:#5a80d8;letter-spacing:0.716px;">Dokumente</div>
<div class="a t" style="left:1390.39px;top:316.85px;font-size:32.64px;line-height:36.46px;color:#b3b3b3;letter-spacing:0.255px;">Bemerkungen</div>
<div class="a t" style="left:1619.09px;top:316.85px;font-size:32.64px;line-height:36.46px;color:#b3b3b3;letter-spacing:0.676px;">Historie</div>
<svg class="a" style="left:1270.00px;top:238.00px;" width="36" height="92" viewBox="0 0 36 92"><path d="M14.6,2 L18.4,2 L22.5,66 L28.6,66 L17,89.5 L5.2,66 L11.5,66 Z" fill="#8cce46"/></svg>
<div class="a t" style="left:571.94px;top:379.37px;font-size:25.33px;line-height:28.30px;color:#5a80d8;">Zugeordnete Dokumente</div>
<div class="a t" style="left:876.27px;top:389.64px;font-size:14.43px;line-height:16.12px;color:#8a8a8a;font-style:italic;">Es wurden 2 zugeordnete Dokumente gefunden</div>
<div class="a t" style="left:1056.25px;top:429.17px;font-size:14.95px;line-height:16.70px;color:#1a1a1a;">Zusätzliche Dokumente einblenden:</div>
<div class="a" style="left:570.7px;top:459px;width:22px;height:22px;border:1.8px solid #c6c6c6;border-radius:50%;box-sizing:border-box;background:#fff"></div>
<div class="a" style="left:575.7px;top:464px;width:12px;height:12px;border-radius:50%;background:#0f3fb5"></div>
<div class="a" style="left:705px;top:459px;width:22px;height:22px;border:1.8px solid #c6c6c6;border-radius:50%;box-sizing:border-box;background:#fff"></div>
<div class="a t" style="left:599.50px;top:462.27px;font-size:14.95px;line-height:16.70px;color:#1a1a1a;letter-spacing:-0.137px;">Listenansicht</div>
<div class="a t" style="left:734.95px;top:462.27px;font-size:14.95px;line-height:16.70px;color:#1a1a1a;letter-spacing:-0.207px;">Galerieansicht</div>
<div class="a" style="left:1056.70px;top:458.30px;width:22.00px;height:22.00px;background:#fff;border:1.3px solid #c4c4c4;box-sizing:border-box;"></div>
<div class="a t" style="left:1085.58px;top:462.77px;font-size:14.95px;line-height:16.70px;color:#1a1a1a;">Übergeordnete Assets</div>
<div class="a" style="left:1254.00px;top:458.30px;width:22.00px;height:22.00px;background:#fff;border:1.3px solid #c4c4c4;box-sizing:border-box;"></div>
<div class="a t" style="left:1281.80px;top:462.77px;font-size:14.95px;line-height:16.70px;color:#1a1a1a;letter-spacing:0.189px;">Baugruppen</div>
<div class="a" style="left:1385.00px;top:458.30px;width:22.00px;height:22.00px;background:#fff;border:1.3px solid #c4c4c4;box-sizing:border-box;"></div>
<div class="a t" style="left:1412.80px;top:462.77px;font-size:14.95px;line-height:16.70px;color:#1a1a1a;letter-spacing:0.130px;">Maßnahmen</div>
<div class="a" style="left:1518.00px;top:458.30px;width:22.00px;height:22.00px;background:#fff;border:1.3px solid #c4c4c4;box-sizing:border-box;"></div>
<div class="a t" style="left:1547.00px;top:462.77px;font-size:14.95px;line-height:16.70px;color:#1a1a1a;letter-spacing:0.267px;">Aufträge</div>
<div class="a" style="left:1625.00px;top:458.30px;width:22.00px;height:22.00px;background:#fff;border:1.3px solid #c4c4c4;box-sizing:border-box;"></div>
<div class="a t" style="left:1654.13px;top:462.77px;font-size:14.95px;line-height:16.70px;color:#1a1a1a;letter-spacing:-0.103px;">Stückliste</div>
<div class="a" style="left:1737.70px;top:458.30px;width:22.00px;height:22.00px;background:#fff;border:1.3px solid #c4c4c4;box-sizing:border-box;"></div>
<div class="a t" style="left:1765.80px;top:462.77px;font-size:14.95px;line-height:16.70px;color:#1a1a1a;letter-spacing:0.189px;">Fremdfirmen</div>
<svg class="a" style="left:1737.70px;top:458.30px;" width="22" height="22" viewBox="0 0 22 22"><path d="M4.2,12 L8.8,16.6 L16.2,6.6" fill="none" stroke="#1d3d9e" stroke-width="2.9" stroke-linecap="round" stroke-linejoin="round"/></svg>
<div class="a" style="left:570.00px;top:507.50px;width:1297.50px;height:472.00px;background:#fff;border:1px solid #dedede;box-sizing:border-box;"></div>
<div class="a" style="left:570.50px;top:573.80px;width:1296.50px;height:33.60px;background:#e9e9e9;"></div>
<div class="a" style="left:570.50px;top:535.40px;width:1296.50px;height:3.20px;background:#bdbdbd;"></div>
<div class="a" style="left:686.30px;top:508.00px;width:1.00px;height:99.40px;background:#dcdcdc;"></div>
<div class="a" style="left:1061.80px;top:508.00px;width:1.00px;height:99.40px;background:#dcdcdc;"></div>
<div class="a" style="left:1196.50px;top:508.00px;width:1.00px;height:99.40px;background:#dcdcdc;"></div>
<div class="a" style="left:1299.60px;top:508.00px;width:1.00px;height:99.40px;background:#dcdcdc;"></div>
<div class="a" style="left:1457.50px;top:508.00px;width:1.00px;height:99.40px;background:#dcdcdc;"></div>
<div class="a" style="left:1580.50px;top:508.00px;width:1.00px;height:99.40px;background:#dcdcdc;"></div>
<div class="a t" style="left:582.12px;top:515.08px;font-size:13.61px;line-height:15.20px;color:#111;font-weight:700;letter-spacing:-0.135px;">ENTFERNEN?</div>
<div class="a t" style="left:699.12px;top:515.08px;font-size:13.61px;line-height:15.20px;color:#111;font-weight:700;letter-spacing:0.275px;">BEZEICHNUNG</div>
<div class="a t" style="left:1073.92px;top:515.08px;font-size:13.61px;line-height:15.20px;color:#111;font-weight:700;letter-spacing:0.240px;">PRÄSENTATION</div>
<div class="a t" style="left:1209.12px;top:515.08px;font-size:13.61px;line-height:15.20px;color:#111;font-weight:700;letter-spacing:0.025px;">HERKUNFT</div>
<div class="a t" style="left:1311.82px;top:515.08px;font-size:13.61px;line-height:15.20px;color:#111;font-weight:700;letter-spacing:-0.023px;">KATEGORIEN</div>
<div class="a t" style="left:1469.72px;top:515.08px;font-size:13.61px;line-height:15.20px;color:#111;font-weight:700;letter-spacing:-0.172px;">ERSTELLT AM</div>
<div class="a t" style="left:696.61px;top:548.58px;font-size:14.82px;line-height:16.56px;color:#222;letter-spacing:0.179px;">danfoss - lieferbedingungen</div>
<div class="a t" style="left:696.61px;top:582.58px;font-size:14.82px;line-height:16.56px;color:#222;">danfoss - manual brakes</div>
<div class="a" style="left:1109.00px;top:545.00px;width:22.50px;height:22.50px;background:#fff;border:1.3px solid #c4c4c4;box-sizing:border-box;"></div>
<div class="a t" style="left:1230.00px;top:548.58px;font-size:14.82px;line-height:16.56px;color:#222;letter-spacing:-0.596px;">Asset</div>
<div class="a t" style="left:1218.01px;top:582.58px;font-size:14.82px;line-height:16.56px;color:#222;">Lieferant</div>
<div class="a t" style="left:1309.93px;top:548.58px;font-size:14.82px;line-height:16.56px;color:#222;letter-spacing:-0.055px;">Verträge, Lieferanten</div>
<div class="a t" style="left:1467.41px;top:548.58px;font-size:14.82px;line-height:16.56px;color:#222;letter-spacing:-0.289px;">07.10.2025</div>
<div class="a t" style="left:1591.13px;top:548.58px;font-size:14.82px;line-height:16.56px;color:#8c8c8c;letter-spacing:0.477px;text-decoration:underline;">Öffnen</div>
<div class="a t" style="left:1648.81px;top:548.58px;font-size:14.82px;line-height:16.56px;color:#8c8c8c;letter-spacing:0.466px;text-decoration:underline;">Download</div>
<div class="a t" style="left:1467.41px;top:582.58px;font-size:14.82px;line-height:16.56px;color:#222;letter-spacing:-0.289px;">07.10.2025</div>
<div class="a t" style="left:1591.13px;top:582.58px;font-size:14.82px;line-height:16.56px;color:#8c8c8c;letter-spacing:0.477px;text-decoration:underline;">Öffnen</div>
<div class="a t" style="left:1648.81px;top:582.58px;font-size:14.82px;line-height:16.56px;color:#8c8c8c;letter-spacing:0.466px;text-decoration:underline;">Download</div>
<div class="a" style="left:1712.8px;top:381.6px;width:66px;height:66px;border-radius:50%;background:#8cc060;box-shadow:1px 2px 4px rgba(0,0,0,0.25)"></div>
<div class="a t" style="left:1735.12px;top:391.13px;font-size:38.52px;line-height:43.03px;color:#ffffff;">6</div>
<svg class="a" style="left:0;top:0;filter:drop-shadow(0px 1.5px 1.5px rgba(0,0,0,0.18))" width="1920" height="1140" viewBox="0 0 1920 1140"><path d="M1151.5,607 L1688.6,607 L1735,492 L1707.8,607 L1879,607 Q1890,607 1890,618 L1890,937.6 Q1890,948.6 1879,948.6 L1151.5,948.6 Q1140.5,948.6 1140.5,937.6 L1140.5,618 Q1140.5,607 1151.5,607 Z" fill="#fff" stroke="#b4b4b4" stroke-width="1.5"/></svg>
<div class="a t" style="left:1172.38px;top:628.03px;font-size:23.39px;line-height:26.13px;color:#555;">Wird die Checkbox aktiviert, werden zusätzlich die Dokumente der</div>
<div class="a t" style="left:1261.38px;top:655.12px;font-size:23.40px;line-height:26.14px;color:#555;">im Asset eingetragenen Unternehmen angezeigt.</div>
<div class="a" style="left:1168px;top:734.5px;width:670px;height:181px;overflow:hidden;background:#fff"><div class="a" style="left:-1168px;top:-734.5px;width:1920px;height:1140px">
<div class="a" style="left:1168.00px;top:734.50px;width:670.00px;height:1.00px;background:#f2f2f2;"></div>
<div class="a" style="left:1175.60px;top:734.50px;width:1.00px;height:180.50px;background:#efefef;"></div>
<div class="a" style="left:1182.50px;top:735.70px;width:5.10px;height:179.30px;background:#3b6fe0;"></div>
<div class="a" style="left:1199.00px;top:734.50px;width:1.00px;height:180.50px;background:#e6e6e6;"></div>
<div class="a" style="left:1837.00px;top:734.50px;width:1.00px;height:180.50px;background:#ececec;"></div>
<div class="a t" style="left:1239.68px;top:718.03px;font-size:15.99px;line-height:17.86px;color:#222;">Typ</div>
<div class="a t" style="left:1239.01px;top:758.09px;font-size:14.93px;line-height:16.68px;color:#1e1e1e;">Fabriknummer</div>
<div class="a t" style="left:1238.99px;top:794.76px;font-size:15.07px;line-height:16.84px;color:#1e1e1e;">Hersteller</div>
<div class="a t" style="left:1239.00px;top:833.14px;font-size:14.98px;line-height:16.74px;color:#1e1e1e;">Lieferant</div>
<div class="a t" style="left:1239.00px;top:869.41px;font-size:15.01px;line-height:16.77px;color:#1e1e1e;">Fremdfirma</div>
<div class="a t" style="left:1239.01px;top:909.49px;font-size:14.93px;line-height:16.67px;color:#222;">Baujahr</div>
<div class="a" style="left:1439.00px;top:700.00px;width:382.00px;height:43.00px;background:#fff;border:1px solid #e2e2e2;box-sizing:border-box;"></div>
<div class="a" style="left:1439.00px;top:749.50px;width:382.00px;height:30.50px;background:#fff;border:1px solid #e2e2e2;box-sizing:border-box;"></div>
<svg class="a" style="left:1798.20px;top:757.00px;" width="15" height="15" viewBox="0 0 15 15"><path d="M1,1 L14,14 M14,1 L1,14" stroke="#8a8a8a" stroke-width="1.8"/></svg>
<div class="a" style="left:1439.00px;top:787.00px;width:382.00px;height:32.50px;background:#fff;border:1px solid #e2e2e2;box-sizing:border-box;"></div>
<div class="a" style="left:1436.00px;top:787.00px;width:342.50px;height:32.50px;background:#f8f800;"></div>
<svg class="a" style="left:1798.20px;top:795.75px;" width="15" height="15" viewBox="0 0 15 15"><path d="M1,1 L14,14 M14,1 L1,14" stroke="#8a8a8a" stroke-width="1.8"/></svg>
<div class="a t" style="left:1445.61px;top:795.06px;font-size:14.85px;line-height:16.59px;color:#6f6f50;">Danfoss GmbH</div>
<div class="a" style="left:1439.00px;top:825.50px;width:382.00px;height:32.00px;background:#fff;border:1px solid #e2e2e2;box-sizing:border-box;"></div>
<div class="a" style="left:1436.00px;top:825.50px;width:342.50px;height:32.00px;background:#f8f800;"></div>
<svg class="a" style="left:1798.20px;top:834.00px;" width="15" height="15" viewBox="0 0 15 15"><path d="M1,1 L14,14 M14,1 L1,14" stroke="#8a8a8a" stroke-width="1.8"/></svg>
<div class="a t" style="left:1445.61px;top:833.06px;font-size:14.85px;line-height:16.59px;color:#6f6f50;">Danfoss GmbH</div>
<div class="a" style="left:1439.00px;top:861.50px;width:382.00px;height:32.00px;background:#fff;border:1px solid #e2e2e2;box-sizing:border-box;"></div>
<div class="a" style="left:1439.60px;top:861.50px;width:342.10px;height:32.00px;background:#f8f800;"></div>
<svg class="a" style="left:1798.20px;top:870.00px;" width="15" height="15" viewBox="0 0 15 15"><path d="M1,1 L14,14 M14,1 L1,14" stroke="#8a8a8a" stroke-width="1.8"/></svg>
<div class="a t" style="left:1445.61px;top:869.56px;font-size:14.85px;line-height:16.59px;color:#6f6f50;">Danfoss GmbH</div>
<div class="a" style="left:1439.00px;top:899.60px;width:382.00px;height:40.40px;background:#fff;border:1px solid #e2e2e2;box-sizing:border-box;"></div>
<svg class="a" style="left:1798.20px;top:906.50px;" width="15" height="15" viewBox="0 0 15 15"><path d="M1,1 L14,14 M14,1 L1,14" stroke="#8a8a8a" stroke-width="1.8"/></svg>
</div></div>
<div class="a" style="left:1168.00px;top:913.50px;width:670.00px;height:1.50px;background:#c4c4c4;"></div>
<div class="a" style="left:569.20px;top:995.30px;width:111.80px;height:34.20px;background:#fff;border:2.5px solid #6e6e6e;box-sizing:border-box;"></div>
<div class="a t" style="left:592.07px;top:1004.84px;font-size:15.42px;line-height:17.23px;color:#ababab;letter-spacing:-0.026px;">Entfernen</div>
<div class="a" style="left:687.60px;top:995.30px;width:112.00px;height:34.20px;background:#fff;border:2.5px solid #6e6e6e;box-sizing:border-box;"></div>
<div class="a t" style="left:704.80px;top:1004.84px;font-size:15.42px;line-height:17.23px;color:#ababab;letter-spacing:-0.027px;">Alle wählen</div>
<div class="a" style="left:806.00px;top:995.30px;width:112.00px;height:34.20px;background:#fff;border:2.5px solid #6e6e6e;box-sizing:border-box;"></div>
<div class="a t" style="left:814.00px;top:1004.84px;font-size:15.42px;line-height:17.23px;color:#ababab;letter-spacing:0.026px;">Alle abwählen</div>
<div class="a" style="left:924.60px;top:995.30px;width:204.20px;height:34.20px;background:#fff;border:2.5px solid #6e6e6e;box-sizing:border-box;"></div>
<div class="a t" style="left:929.97px;top:1004.84px;font-size:15.42px;line-height:17.23px;color:#ababab;letter-spacing:0.158px;">Dokumente direkt zuordnen</div>
<div class="a" style="left:105.80px;top:1074.60px;width:111.90px;height:34.40px;background:#3475ee;border:2.5px solid #0c1633;box-sizing:border-box;"></div>
<div class="a t" style="left:124.05px;top:1085.13px;font-size:14.55px;line-height:16.25px;color:#ffffff;font-weight:700;">Bearbeiten</div>
<div class="a" style="left:224.30px;top:1074.60px;width:111.90px;height:34.40px;background:#fff;border:2.5px solid #111;box-sizing:border-box;"></div>
<div class="a t" style="left:244.94px;top:1084.86px;font-size:14.84px;line-height:16.58px;color:#111;font-weight:700;">Neu laden</div>
<div class="a" style="left:1472.50px;top:1075.00px;width:422.00px;height:37.50px;background:#fff;border:1px solid #e4e4e4;box-sizing:border-box;"></div>
<div class="a t" style="left:1485.42px;top:1086.89px;font-size:14.48px;line-height:16.17px;color:#8a8a8a;font-style:italic;">IH-Status</div>
<div class="a" style="left:1561.00px;top:1083.00px;width:22.30px;height:22.30px;background:#dc143c;border:1.6px solid #222;box-sizing:border-box;"></div>
<div class="a t" style="left:1588.63px;top:1086.89px;font-size:14.48px;line-height:16.17px;color:#8a8a8a;font-style:italic;letter-spacing:-0.191px;">sehr hoch</div>
<div class="a" style="left:1665.00px;top:1083.00px;width:22.30px;height:22.30px;background:#ffd700;border:1.6px solid #222;box-sizing:border-box;"></div>
<div class="a t" style="left:1692.78px;top:1086.89px;font-size:14.48px;line-height:16.17px;color:#8a8a8a;font-style:italic;letter-spacing:-0.158px;">hoch</div>
<div class="a" style="left:1738.00px;top:1083.00px;width:22.30px;height:22.30px;background:#228b22;border:1.6px solid #222;box-sizing:border-box;"></div>
<div class="a t" style="left:1765.50px;top:1086.89px;font-size:14.48px;line-height:16.17px;color:#8a8a8a;font-style:italic;letter-spacing:0.080px;">gering</div>
<div class="a" style="left:1820.75px;top:1083.00px;width:22.30px;height:22.30px;background:#808080;border:1.6px solid #222;box-sizing:border-box;"></div>
<div class="a t" style="left:1847.78px;top:1086.89px;font-size:14.48px;line-height:16.17px;color:#8a8a8a;font-style:italic;letter-spacing:0.031px;">keine</div>
</body></html>
